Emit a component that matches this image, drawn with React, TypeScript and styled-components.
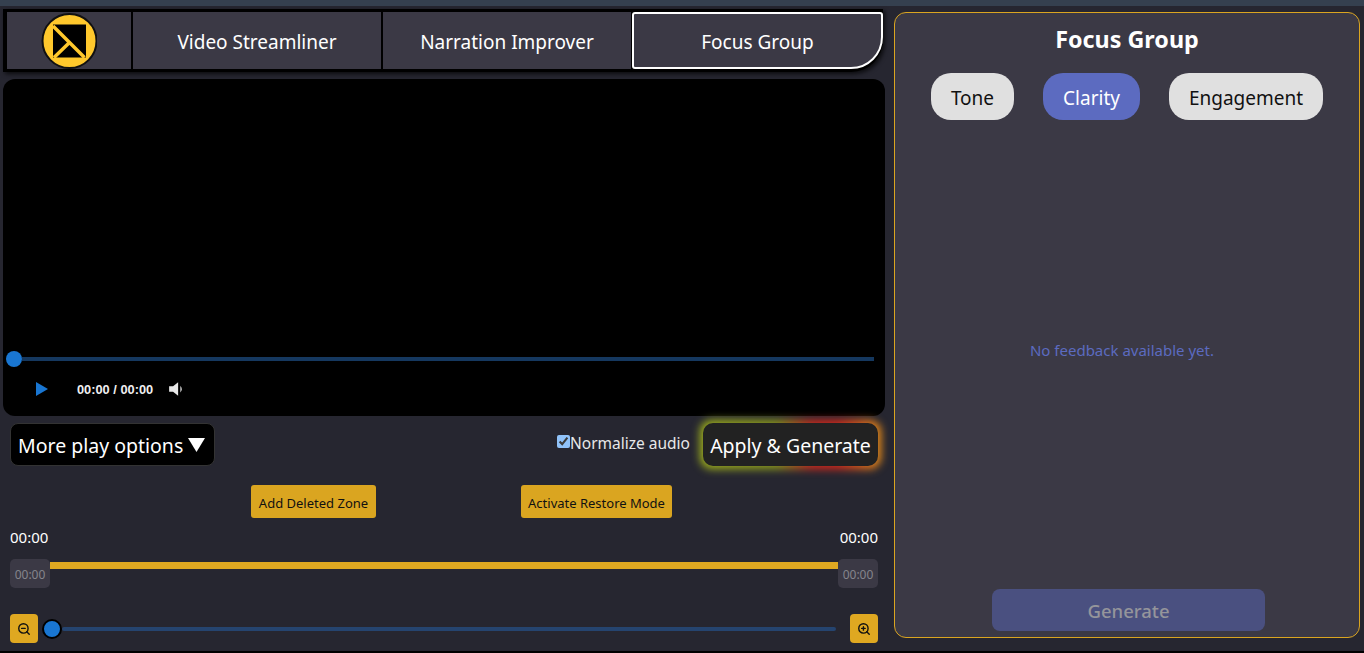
import React from 'react';
import styled, { createGlobalStyle } from 'styled-components';
import { LuZoomIn, LuZoomOut } from 'react-icons/lu';

const GlobalStyle = createGlobalStyle`
  html, body {
    margin: 0;
    padding: 0;
    height: 100%;
    overflow: hidden;
    background: #262630;
    font-family: "Noto Sans", "Open Sans", sans-serif;
  }
`;

const Page = styled.div`
  width: 1364px;
  height: 653px;
  box-sizing: border-box;
  display: flex;
  flex-direction: column;
  background: #262630;
  border-bottom: 2px solid #000;
`;

const TopStrip = styled.div`
  height: 6px;
  flex: none;
  background: #35404f;
`;

const Main = styled.div`
  flex: 1;
  display: grid;
  grid-template-columns: 882px 466px;
  column-gap: 9px;
  padding: 3px 0 0 3px;
  min-height: 0;
`;

const LeftColumn = styled.div`
  display: flex;
  flex-direction: column;
  min-width: 0;
`;

const TabBar = styled.nav`
  width: 880px;
  height: 63px;
  box-sizing: border-box;
  padding: 3px 1px 3px 4px;
  display: grid;
  grid-template-columns: 124px 248px 248px 250px;
  column-gap: 2px;
  background: #000;
  border-bottom-right-radius: 32px;
  box-shadow: 2px 2px 4px rgba(0, 0, 0, 0.7);
`;

const TabCell = styled.div<{ $active?: boolean }>`
  display: flex;
  align-items: center;
  justify-content: center;
  box-sizing: border-box;
  padding-top: 3px;
  background: #3b3945;
  color: #fff;
  font-size: 19px;
  ${(p) =>
    p.$active &&
    `
    margin-left: -1px;
    border: 2px solid #fff;
    border-radius: 3px 3px 32px 3px;
  `}
`;

const LogoCell = styled(TabCell)`
  padding-top: 0;
`;

const VideoPanel = styled.div`
  margin-top: 7px;
  height: 337px;
  box-sizing: border-box;
  background: #000;
  border-radius: 12px;
  display: flex;
  flex-direction: column;
  justify-content: flex-end;
  padding: 0 11px 10px 3px;
`;

const SeekRow = styled.div`
  display: flex;
  align-items: center;
  height: 16px;
`;

const SeekThumb = styled.div`
  width: 16px;
  height: 16px;
  flex: none;
  border-radius: 50%;
  background: #1976d2;
`;

const SeekTrack = styled.div`
  flex: 1;
  height: 4px;
  background: #15385f;
`;

const PlayerControls = styled.div`
  display: flex;
  align-items: center;
  height: 34px;
  margin-top: 5px;
  padding-left: 29px;
`;

const TimeLabel = styled.span`
  margin-left: 28px;
  margin-right: 15px;
  color: #f0f0f0;
  font: bold 12.8px "Liberation Sans", sans-serif;
`;

const ControlsRow = styled.div`
  display: flex;
  align-items: center;
  height: 43px;
  margin-top: 7px;
  padding: 0 7px;
  isolation: isolate;
`;

const PlayOptions = styled.button`
  width: 205px;
  height: 43px;
  box-sizing: border-box;
  display: flex;
  align-items: center;
  gap: 5px;
  padding: 2px 0 0 7px;
  border: 1px solid #333;
  border-radius: 8px;
  background: #000;
  color: #fff;
  font-family: inherit;
  font-size: 19.5px;
  white-space: nowrap;
`;

const Caret = styled.svg`
  width: 17px;
  height: 14px;
  flex: none;
  margin-top: -2px;
`;

const NormalizeLabel = styled.label`
  margin-left: auto;
  margin-bottom: 4px;
  display: flex;
  align-items: center;
  color: #e8e8e8;
  font-size: 15.5px;
  white-space: nowrap;

  input {
    width: 13px;
    height: 13px;
    margin: -2px 0 0;
    accent-color: #90c2f9;
  }
`;

const ApplyButton = styled.button`
  position: relative;
  margin-left: 13px;
  width: 175px;
  height: 43px;
  padding: 2px 0 0;
  border: none;
  border-radius: 10px;
  background: #222;
  color: #fff;
  font-family: inherit;
  font-size: 19.5px;
  white-space: nowrap;

  &::before {
    content: '';
    position: absolute;
    inset: -3px;
    z-index: -1;
    border-radius: 12px;
    background: linear-gradient(90deg, #a3b51c 0%, #8f9f1c 42%, #d42a1c 62%, #dc281a 76%, #ee9618 100%);
    filter: blur(4px);
  }
`;

const ActionRow = styled.div`
  display: flex;
  margin-top: 19px;
  padding-left: 248px;
  gap: 145px;
`;

const GoldButton = styled.button<{ $width: number }>`
  width: ${(p) => p.$width}px;
  height: 33px;
  padding: 2px 0 0;
  border: none;
  border-radius: 3px;
  background: #daa520;
  color: #111;
  font-family: inherit;
  font-size: 13px;
  white-space: nowrap;
`;

const TimesRow = styled.div`
  display: flex;
  justify-content: space-between;
  margin-top: 9px;
  padding: 0 7px;
  color: #fff;
  font-size: 15px;
  line-height: 20px;
`;

const TimelineRow = styled.div`
  display: flex;
  align-items: flex-start;
  margin-top: 12px;
  padding: 0 7px;
`;

const TimeChip = styled.div`
  width: 40px;
  height: 29px;
  box-sizing: border-box;
  padding-top: 2px;
  flex: none;
  display: flex;
  align-items: center;
  justify-content: center;
  border-radius: 5px;
  background: #3b3945;
  color: #85858c;
  font-size: 12px;
`;

const TimelineBar = styled.div`
  flex: 1;
  height: 7px;
  margin-top: 3px;
  background: #dfa821;
`;

const ZoomRow = styled.div`
  display: flex;
  align-items: center;
  margin-top: 26px;
  padding: 0 7px;
`;

const ZoomButton = styled.button`
  width: 28px;
  height: 29px;
  flex: none;
  display: flex;
  align-items: center;
  justify-content: center;
  padding: 0;
  border: none;
  border-radius: 4px;
  background: #dfa821;
  color: #111;
`;

const ZoomThumb = styled.div`
  width: 20px;
  height: 20px;
  flex: none;
  box-sizing: border-box;
  margin-left: 4px;
  border: 2px solid #000;
  border-radius: 50%;
  background: #1976d2;
`;

const ZoomTrack = styled.div`
  flex: 1;
  height: 4px;
  margin: 0 14px 0 0;
  border-radius: 2px;
  background: #25446f;
`;

const FeedbackPanel = styled.aside`
  height: 626px;
  box-sizing: border-box;
  display: flex;
  flex-direction: column;
  align-items: center;
  margin-top: 3px;
  padding-bottom: 6px;
  background: #3b3945;
  border: 1px solid #daa520;
  border-radius: 12px;
`;

const PanelTitle = styled.h2`
  margin: 8px 0 0;
  color: #fff;
  font-size: 23.3px;
  line-height: 36px;
  font-weight: 700;
`;

const PillRow = styled.div`
  display: flex;
  gap: 29px;
  margin-top: 16px;
`;

const Pill = styled.button<{ $active?: boolean }>`
  height: 47px;
  padding: 2px 20px 0;
  border: none;
  border-radius: 20px;
  background: ${(p) => (p.$active ? '#5c6bc0' : '#e0e0e0')};
  color: ${(p) => (p.$active ? '#fff' : '#111')};
  font-family: inherit;
  font-size: 19px;
`;

const EmptyNote = styled.div`
  flex: 1;
  display: flex;
  align-items: center;
  justify-content: center;
  color: #5c6bc0;
  font-size: 15px;
  padding: 0 10px 9px 0;
`;

const GenerateButton = styled.button`
  width: 273px;
  height: 42px;
  margin-left: 3px;
  padding: 0;
  border: none;
  border-radius: 8px;
  background: #4a5080;
  color: #95959b;
  font-family: inherit;
  font-size: 18.5px;
  font-weight: 500;
`;

const Logo = () => (
  <svg width="56" height="56" viewBox="0 0 56 56">
    <circle cx="28.5" cy="28" r="27" fill="#ffc82c" stroke="#111" strokeWidth="2" />
    <rect x="12" y="11.5" width="33" height="33" fill="#000" />
    <path d="M12 13 L43.5 44.5 M13 44.5 L29 29" stroke="#ffc82c" strokeWidth="3.5" fill="none" />
  </svg>
);

const PlayIcon = () => (
  <svg width="14" height="16" viewBox="0 0 14 16">
    <path d="M1 1 L13 8 L1 15 Z" fill="#1976d2" />
  </svg>
);

const VolumeIcon = () => (
  <svg width="18" height="18" viewBox="0 0 16 16">
    <path d="M1 5.5 H4.5 L9 2 V14 L4.5 10.5 H1 Z" fill="#e8e8e8" />
    <path d="M11 5 Q13.5 8 11 11 Z" fill="#e8e8e8" />
  </svg>
);

export default function App() {
  return (
    <Page>
      <GlobalStyle />
      <TopStrip />
      <Main>
        <LeftColumn>
          <TabBar>
            <LogoCell>
              <Logo />
            </LogoCell>
            <TabCell>Video Streamliner</TabCell>
            <TabCell>Narration Improver</TabCell>
            <TabCell $active>Focus Group</TabCell>
          </TabBar>
          <VideoPanel>
            <SeekRow>
              <SeekThumb />
              <SeekTrack />
            </SeekRow>
            <PlayerControls>
              <PlayIcon />
              <TimeLabel>00:00 / 00:00</TimeLabel>
              <VolumeIcon />
            </PlayerControls>
          </VideoPanel>
          <ControlsRow>
            <PlayOptions>
              More play options
              <Caret viewBox="0 0 17 14">
                <path d="M0 0 H17 L8.5 14 Z" fill="#fff" />
              </Caret>
            </PlayOptions>
            <NormalizeLabel>
              <input type="checkbox" defaultChecked />
              Normalize audio
            </NormalizeLabel>
            <ApplyButton>Apply &amp; Generate</ApplyButton>
          </ControlsRow>
          <ActionRow>
            <GoldButton $width={125}>Add Deleted Zone</GoldButton>
            <GoldButton $width={151}>Activate Restore Mode</GoldButton>
          </ActionRow>
          <TimesRow>
            <span>00:00</span>
            <span>00:00</span>
          </TimesRow>
          <TimelineRow>
            <TimeChip>00:00</TimeChip>
            <TimelineBar />
            <TimeChip>00:00</TimeChip>
          </TimelineRow>
          <ZoomRow>
            <ZoomButton>
              <LuZoomOut size={14} strokeWidth={2.4} />
            </ZoomButton>
            <ZoomThumb />
            <ZoomTrack />
            <ZoomButton>
              <LuZoomIn size={14} strokeWidth={2.4} />
            </ZoomButton>
          </ZoomRow>
        </LeftColumn>
        <FeedbackPanel>
          <PanelTitle>Focus Group</PanelTitle>
          <PillRow>
            <Pill>Tone</Pill>
            <Pill $active>Clarity</Pill>
            <Pill>Engagement</Pill>
          </PillRow>
          <EmptyNote>No feedback available yet.</EmptyNote>
          <GenerateButton>Generate</GenerateButton>
        </FeedbackPanel>
      </Main>
    </Page>
  );
}
